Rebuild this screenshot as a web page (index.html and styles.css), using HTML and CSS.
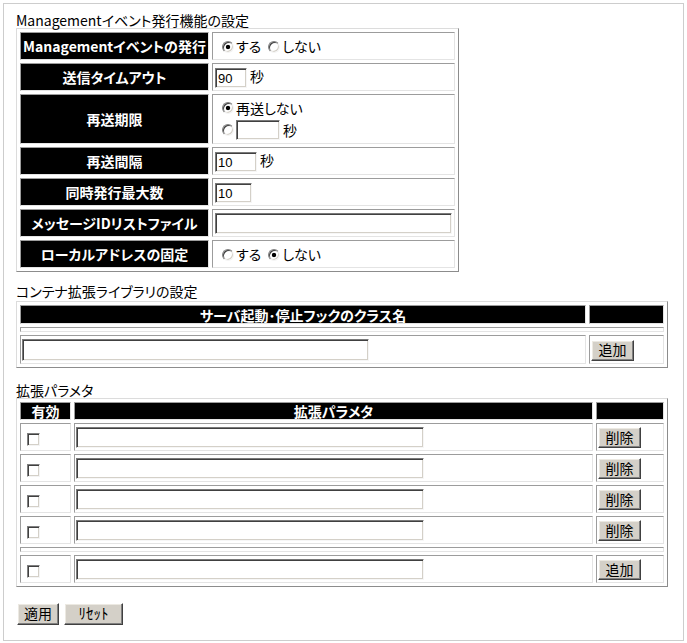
FILE: index.html
```html
<!DOCTYPE html>
<html lang="ja">
<head>
<meta charset="utf-8">
<title>設定</title>
<link rel="stylesheet" href="styles.css">
</head>
<body>
<div class="frame">
  <div class="title t1">Managementイベント発行機能の設定</div>
  <table class="grid g1">
    <tr class="r28">
      <th class="lab">Managementイベントの発行</th>
      <td class="val"><input type="radio" class="rd" name="mg" checked><span>する</span><input type="radio" class="rd" name="mg"><span>しない</span></td>
    </tr>
    <tr class="r28">
      <th>送信タイムアウト</th>
      <td class="val"><input class="tx w32" value="90"><span class="unit">秒</span></td>
    </tr>
    <tr class="r50">
      <th>再送期限</th>
      <td class="val">
        <div class="line"><input type="radio" class="rd" name="rs" checked><span>再送しない</span></div>
        <div class="line"><input type="radio" class="rd" name="rs"><input class="tx w44" value=""><span class="unit">秒</span></div>
      </td>
    </tr>
    <tr class="r28">
      <th>再送間隔</th>
      <td class="val"><input class="tx w42" value="10"><span class="unit">秒</span></td>
    </tr>
    <tr class="r28">
      <th>同時発行最大数</th>
      <td class="val"><input class="tx w37" value="10"></td>
    </tr>
    <tr class="r28">
      <th>メッセージIDリストファイル</th>
      <td class="val"><input class="tx w237 h21" value=""></td>
    </tr>
    <tr class="r28">
      <th>ローカルアドレスの固定</th>
      <td class="val"><input type="radio" class="rd" name="la"><span>する</span><input type="radio" class="rd" name="la" checked><span>しない</span></td>
    </tr>
  </table>

  <div class="title t2">コンテナ拡張ライブラリの設定</div>
  <table class="grid g2">
    <tr class="r19">
      <th class="c566">サーバ起動･停止フックのクラス名</th>
      <th class="c75"></th>
    </tr>
    <tr class="r5"><td colspan="2"></td></tr>
    <tr class="r29">
      <td class="p1"><input class="tx w347 h22" value=""></td>
      <td class="p1"><button class="btn bs">追加</button></td>
    </tr>
  </table>

  <div class="title t3">拡張パラメタ</div>
  <table class="grid g3">
    <tr class="r18">
      <th class="c51">有効</th>
      <th class="c519">拡張パラメタ</th>
      <th class="c68"></th>
    </tr>
    <tr class="r28">
      <td class="chk"><input type="checkbox" class="cb"></td>
      <td class="p1"><input class="tx w348 h21" value=""></td>
      <td class="p1"><button class="btn bs">削除</button></td>
    </tr>
    <tr class="r28">
      <td class="chk"><input type="checkbox" class="cb"></td>
      <td class="p1"><input class="tx w348 h21" value=""></td>
      <td class="p1"><button class="btn bs">削除</button></td>
    </tr>
    <tr class="r28">
      <td class="chk"><input type="checkbox" class="cb"></td>
      <td class="p1"><input class="tx w348 h21" value=""></td>
      <td class="p1"><button class="btn bs">削除</button></td>
    </tr>
    <tr class="r28">
      <td class="chk"><input type="checkbox" class="cb"></td>
      <td class="p1"><input class="tx w348 h21" value=""></td>
      <td class="p1"><button class="btn bs">削除</button></td>
    </tr>
    <tr class="r5"><td colspan="3"></td></tr>
    <tr class="r28">
      <td class="chk"><input type="checkbox" class="cb"></td>
      <td class="p1"><input class="tx w348 h21" value=""></td>
      <td class="p1"><button class="btn bs">追加</button></td>
    </tr>
  </table>

  <div class="actions">
    <button class="btn b-apply">適用</button>
    <button class="btn b-reset">ﾘｾｯﾄ</button>
  </div>
</div>
</body>
</html>
```

FILE: styles.css
```css
body {
  margin: 0;
  background: #fff;
  color: #000;
  font-family: "Noto Sans CJK JP", "Noto Sans", sans-serif;
  font-size: 14px;
  font-feature-settings: "palt";
}

.frame {
  margin: 3px;
  height: 638px;
  box-sizing: border-box;
  border: 1px solid #cdcdcd;
  padding: 0 0 0 12px;
}

.title {
  line-height: 15px;
  height: 15px;
  white-space: nowrap;
}
.t1 { padding-top: 9px; }
.t2 { margin-top: 12px; margin-bottom: 2px; }
.t3 { margin-top: 15px; }

.grid {
  border-collapse: separate;
  border-spacing: 3px;
  border: 1px solid;
  border-color: #dcdcdc #8c8c8c #8c8c8c #dcdcdc;
  table-layout: fixed;
}
.grid td,
.grid th {
  box-sizing: border-box;
  border: 1px solid;
  border-color: #9c9c9c #e4e4e4 #e4e4e4 #9c9c9c;
  padding: 0;
  vertical-align: middle;
}
.grid th {
  background: #000;
  color: #fff;
  font-weight: bold;
  text-align: center;
  white-space: nowrap;
  line-height: 16px;
}

.g1 { width: 443px; }
.g1 .lab { width: 189px; }
.g1 .val { width: 243px; padding-left: 2px; line-height: 20px; white-space: nowrap; }

.g2, .g3 { width: 652px; }
.c566 { width: 566px; }
.c75 { width: 75px; }
.c51 { width: 51px; }
.c519 { width: 519px; }
.c68 { width: 68px; }

.r5 td { height: 5px; }
.r18 th { height: 18px; }
.r19 th { height: 19px; }
.r28 td, .r28 th { height: 28px; }
.r29 td { height: 29px; }
.r50 td, .r50 th { height: 50px; }

.line {
  height: 22px;
  line-height: 22px;
  display: flex;
  align-items: center;
}

.p1 { padding-left: 1px !important; }
.chk { padding-left: 6px !important; }

.unit { margin-left: 3px; }

.rd {
  -webkit-appearance: none;
  appearance: none;
  box-sizing: border-box;
  width: 12px;
  height: 12px;
  margin: 0 2px 0 7px;
  border-radius: 50%;
  border: 1px solid;
  border-color: #808080 #f4f4f4 #f4f4f4 #808080;
  box-shadow: inset 1px 1px #404040, inset -1px -1px #d4d0c8;
  background: #fff;
  vertical-align: -1px;
}
.rd:checked {
  background: radial-gradient(circle, #000 0, #000 1.8px, #fff 2.6px);
}

.cb {
  -webkit-appearance: none;
  appearance: none;
  box-sizing: border-box;
  width: 13px;
  height: 13px;
  margin: 0;
  border: 1px solid;
  border-color: #808080 #f4f4f4 #f4f4f4 #808080;
  box-shadow: inset 1px 1px #404040, inset -1px -1px #d4d0c8;
  background: #fff;
  vertical-align: middle;
}

.tx {
  box-sizing: border-box;
  height: 20px;
  margin: 0;
  padding: 0 2px;
  border: 1px solid;
  border-color: #7a7a7a #f6f6f6 #f6f6f6 #7a7a7a;
  box-shadow: inset 1px 1px #404040, inset -1px -1px #d4d0c8;
  background: #fff;
  font-family: "Liberation Sans", "Noto Sans", sans-serif;
  font-size: 13px;
  color: #000;
  vertical-align: middle;
  outline: none;
}
.w32 { width: 32px; }
.w37 { width: 37px; }
.w42 { width: 42px; }
.w44 { width: 44px; }
.w237 { width: 237px; }
.w347 { width: 347px; }
.w348 { width: 348px; }
.h21 { height: 21px; }
.h22 { height: 22px; }

.btn {
  box-sizing: border-box;
  margin: 0;
  padding: 0 0 2px 0;
  background: #d4d0c8;
  border: 1px solid;
  border-color: #ffffff #404040 #404040 #ffffff;
  box-shadow: inset -1px -1px #808080, inset 1px 1px #ece9e2;
  color: #000;
  font-family: "Noto Sans CJK JP", "Noto Sans", sans-serif;
  font-size: 14px;
  font-feature-settings: "palt";
  line-height: 16px;
  vertical-align: middle;
}
.bs { width: 43px; height: 21px; }

.actions {
  display: flex;
  gap: 5px;
  margin-top: 16px;
  padding-left: 1px;
}
.b-apply { width: 42px; height: 22px; }
.b-reset { width: 59px; height: 22px; font-size: 15px; }
```
